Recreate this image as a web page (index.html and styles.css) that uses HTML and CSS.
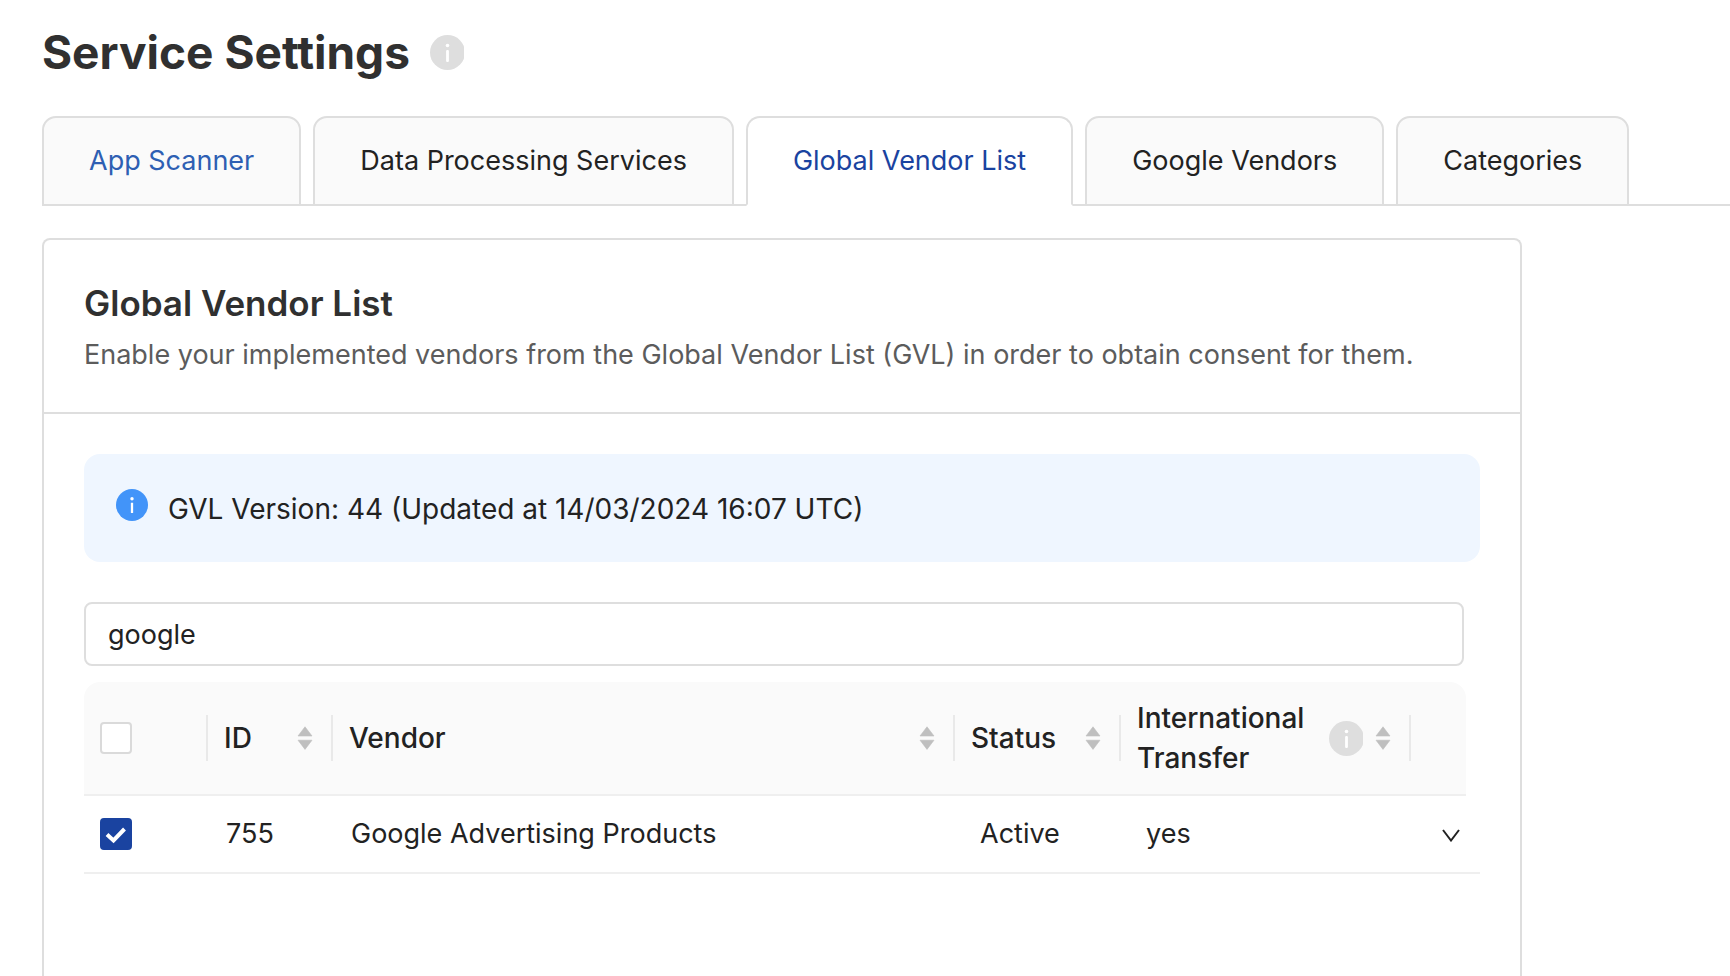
FILE: index.html
```html
<!DOCTYPE html>
<html lang="en">
<head>
<meta charset="utf-8">
<meta name="viewport" content="width=device-width, initial-scale=1">
<title>Service Settings</title>
<link rel="stylesheet" href="styles.css">
</head>
<body>
<svg class="sprite" aria-hidden="true">
  <symbol id="info" viewBox="0 0 34 35">
    <circle cx="17.5" cy="17.5" r="17.5" fill="#dedede"/>
    <circle cx="17.5" cy="10.5" r="1.8" fill="#fff"/>
    <rect x="16.1" y="15" width="2.8" height="12" rx="1" fill="#fff"/>
  </symbol>
  <symbol id="sort" viewBox="0 0 16 24">
    <path d="M8 0.8 L15 10 H1 Z M1 14.2 H15 L8 23.4 Z" fill="#bfbfbf" stroke="#bfbfbf" stroke-width="0.6" stroke-linejoin="round"/>
  </symbol>
</svg>
<header class="page-head">
  <h1 class="page-title">Service Settings</h1>
  <button class="icon-button" type="button" aria-label="About service settings"><svg class="info-icon"><use href="#info"/></svg></button>
</header>
<nav class="tabs" aria-label="Service settings">
  <a class="tab tab-hover" href="#scanner">App Scanner</a>
  <a class="tab" href="#services">Data Processing Services</a>
  <a class="tab tab-active" href="#gvl" aria-current="page">Global Vendor List</a>
  <a class="tab" href="#google">Google Vendors</a>
  <a class="tab" href="#categories">Categories</a>
</nav>
<main class="card">
  <div class="card-head">
    <h2 class="card-title">Global Vendor List</h2>
    <p class="card-text">Enable your implemented vendors from the Global Vendor List (GVL) in order to obtain consent for them.</p>
  </div>
  <div class="card-body">
    <div class="alert" role="status">
      <svg class="alert-icon" viewBox="64 64 896 896" aria-hidden="true"><circle cx="512" cy="512" r="448" fill="#4294f9"/><path d="M544 728c0 4.400-3.600 8-8 8h-48c-4.400 0-8-3.600-8-8V456c0-4.400 3.600-8 8-8h48c4.400 0 8 3.600 8 8zM512 384a48 48 0 010-96 48 48 0 010 96z" fill="#fff"/></svg>
      <span>GVL Version: 44 (Updated at 14/03/2024 16:07 UTC)</span>
    </div>
    <input class="search" type="text" value="google" aria-label="Search vendors">
    <table class="vendors">
      <colgroup>
        <col class="col-select"><col class="col-id"><col><col class="col-status"><col class="col-transfer"><col class="col-action"><col class="col-gutter">
      </colgroup>
      <thead>
        <tr>
          <th class="divided"><input class="check" type="checkbox" aria-label="Select all vendors"></th>
          <th class="divided"><div class="head-cell">ID<button class="icon-button" type="button" aria-label="Sort by ID"><svg class="sort-icon"><use href="#sort"/></svg></button></div></th>
          <th class="divided"><div class="head-cell">Vendor<button class="icon-button" type="button" aria-label="Sort by vendor"><svg class="sort-icon"><use href="#sort"/></svg></button></div></th>
          <th class="divided"><div class="head-cell">Status<button class="icon-button" type="button" aria-label="Sort by status"><svg class="sort-icon"><use href="#sort"/></svg></button></div></th>
          <th class="divided"><div class="head-cell"><span class="head-label">International Transfer</span><span class="head-tools"><button class="icon-button" type="button" aria-label="About international transfer"><svg class="info-icon"><use href="#info"/></svg></button><button class="icon-button" type="button" aria-label="Sort by international transfer"><svg class="sort-icon"><use href="#sort"/></svg></button></span></div></th>
          <th class="last-head"></th>
          <th class="gutter"></th>
        </tr>
      </thead>
      <tbody>
        <tr>
          <td><input class="check" type="checkbox" checked aria-label="Select Google Advertising Products"></td>
          <td>755</td>
          <td>Google Advertising Products</td>
          <td class="indent">Active</td>
          <td class="indent">yes</td>
          <td class="action" colspan="2"><button class="icon-button" type="button" aria-label="Expand row"><svg class="chevron" viewBox="0 0 18 14"><path d="M1 2 L9 12.500 L17 2" fill="none" stroke="#222" stroke-width="2"/></svg></button></td>
        </tr>
      </tbody>
    </table>
  </div>
</main>
</body>
</html>
```
FILE: styles.css
```css
* {
  box-sizing: border-box;
}

body {
  display: flex;
  flex-direction: column;
  min-height: 100vh;
  margin: 0;
  padding: 24px 0 0 42px;
  background: #fff;
  color: #222;
  font: 400 27px/40px Inter, "Liberation Sans", sans-serif;
}

.sprite {
  position: absolute;
  width: 0;
  height: 0;
}

.icon-button {
  display: flex;
  padding: 0;
  border: 0;
  background: none;
  cursor: pointer;
}

.info-icon {
  width: 34px;
  height: 35px;
}

.page-head {
  display: flex;
  align-items: center;
  gap: 20px;
  height: 56px;
}

.page-title {
  margin: 0;
  color: #303030;
  font-size: 46px;
  font-weight: 700;
  line-height: 56px;
}

.tabs {
  display: flex;
  gap: 12px;
  margin-top: 36px;
  box-shadow: inset 0 -2px #dedede;
}

.tab {
  padding: 23px 45px;
  border: 2px solid #dedede;
  border-radius: 14px 14px 0 0;
  background: #fafafa;
  color: #222;
  text-decoration: none;
  white-space: nowrap;
}

.tab-hover {
  color: #2e5fb3;
}

.tab-active {
  border-bottom-color: #fff;
  background: #fff;
  color: #1a43a0;
}

.card {
  flex: 1;
  width: calc(100% - 208px);
  margin-top: 32px;
  border: 2px solid #dedede;
  border-bottom: 0;
  border-radius: 8px 8px 0 0;
}

.card-head {
  padding: 41px 40px 37px;
  border-bottom: 2px solid #dedede;
}

.card-title {
  margin: 0 0 10px;
  color: #303030;
  font-size: 35px;
  font-weight: 600;
  line-height: 44px;
}

.card-text {
  margin: 0;
  color: #5c5c5c;
}

.card-body {
  padding: 40px;
}

.alert {
  display: flex;
  align-items: flex-start;
  gap: 20px;
  min-height: 108px;
  padding: 35px 32px 32px;
  border-radius: 16px;
  background: #eff6ff;
  font-size: 28px;
}

.alert-icon {
  width: 32px;
  height: 32px;
}

.search {
  display: block;
  width: calc(100% - 16px);
  height: 64px;
  margin: 40px 0 16px;
  padding: 0 22px;
  border: 2px solid #dedede;
  border-radius: 8px;
  background: #fff;
  color: #222;
  font: inherit;
}

.vendors {
  width: 100%;
  border-collapse: separate;
  border-spacing: 0;
  table-layout: fixed;
}

.col-select {
  width: 124px;
}

.col-id {
  width: 125px;
}

.col-status {
  width: 166px;
}

.col-transfer {
  width: 290px;
}

.col-action {
  width: 55px;
}

.col-gutter {
  width: 14px;
}

th {
  padding: 16px 20px 16px 16px;
  border-bottom: 2px solid #efefef;
  background: #fafafa linear-gradient(#e9e9e9, #e9e9e9) no-repeat right / 0 46px;
  font-size: 28px;
  font-weight: 500;
  text-align: left;
}

th.divided {
  background-size: 2px 46px;
}

th:first-child {
  border-top-left-radius: 16px;
}

th.last-head {
  border-top-right-radius: 16px;
}

th.gutter {
  padding: 0;
  border: 0;
  background: none;
}

.head-cell {
  display: flex;
  align-items: center;
  justify-content: space-between;
  height: 80px;
}

.head-label {
  width: min-content;
}

.head-tools {
  display: flex;
  align-items: center;
  gap: 12px;
}

.sort-icon {
  width: 16px;
  height: 24px;
}

td {
  height: 78px;
  padding: 0 18px;
  border-bottom: 2px solid #efefef;
}

td:first-child {
  padding: 0 16px;
}

td.indent {
  padding: 0 25px;
}

td.action {
  padding: 2px 0 0 31px;
}

.chevron {
  width: 18px;
  height: 14px;
}

.check {
  display: block;
  width: 32px;
  height: 32px;
  margin: 0;
  border: 2px solid #dadada;
  border-radius: 4px;
  background: #fff;
  appearance: none;
}

.check:checked {
  border-color: #1a43a0;
  background: #1a43a0 url("data:image/svg+xml,%3Csvg xmlns='http://www.w3.org/2000/svg' viewBox='0 0 28 28'%3E%3Cpath d='M5 14.500l6.500 6L22.500 9' fill='none' stroke='%23fff' stroke-width='4'/%3E%3C/svg%3E") center / 28px no-repeat;
}
```
